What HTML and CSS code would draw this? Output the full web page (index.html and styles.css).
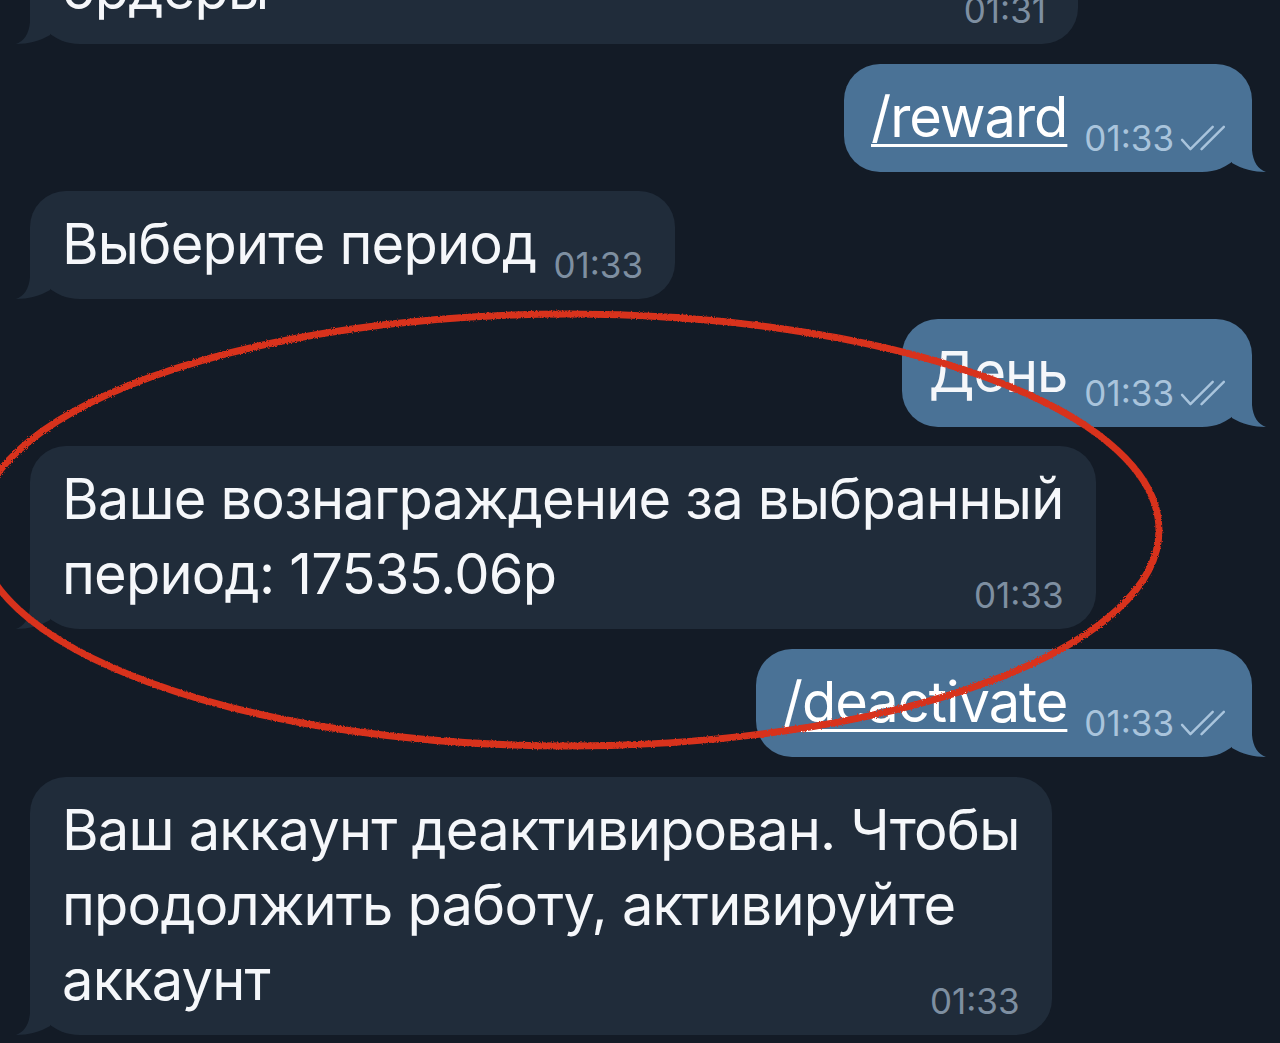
FILE: index.html
```html
<!DOCTYPE html>
<html lang="ru">
<head>
<meta charset="utf-8">
<title>Chat</title>
<link rel="stylesheet" href="styles.css">
</head>
<body>
<div class="chat">
  <div class="row row-in">
    <div class="bubble bubble-in bubble-cut">
      <div class="line line-last"><span class="txt">ордеры</span><span class="meta">01:31</span></div>
      <svg class="tail tail-in" viewBox="0 0 48 52"><path d="M12 43 C22 49 34 52 46 52 C38 49 33 42 32 30 L32 0 L12 0 Z"/></svg>
    </div>
  </div>

  <div class="row row-out">
    <div class="bubble bubble-out">
      <div class="line line-last"><a class="cmd">/reward</a><span class="meta">01:33<svg class="checks" viewBox="0 0 48 28"><path d="M2 16 L11 26 L35 2 M23 26 L47 2"/></svg></span></div>
      <svg class="tail tail-out" viewBox="0 0 48 52"><path d="M12 43 C22 49 34 52 46 52 C38 49 33 42 32 30 L32 0 L12 0 Z"/></svg>
    </div>
  </div>

  <div class="row row-in">
    <div class="bubble bubble-in">
      <div class="line line-last"><span class="txt">Выберите период</span><span class="meta">01:33</span></div>
      <svg class="tail tail-in" viewBox="0 0 48 52"><path d="M12 43 C22 49 34 52 46 52 C38 49 33 42 32 30 L32 0 L12 0 Z"/></svg>
    </div>
  </div>

  <div class="row row-out">
    <div class="bubble bubble-out">
      <div class="line line-last"><span class="txt">День</span><span class="meta">01:33<svg class="checks" viewBox="0 0 48 28"><path d="M2 16 L11 26 L35 2 M23 26 L47 2"/></svg></span></div>
      <svg class="tail tail-out" viewBox="0 0 48 52"><path d="M12 43 C22 49 34 52 46 52 C38 49 33 42 32 30 L32 0 L12 0 Z"/></svg>
    </div>
  </div>

  <div class="row row-in">
    <div class="bubble bubble-in">
      <div class="line">Ваше вознаграждение за выбранный</div>
      <div class="line line-last"><span class="txt">период: 17535.06р</span><span class="meta">01:33</span></div>
      <svg class="tail tail-in" viewBox="0 0 48 52"><path d="M12 43 C22 49 34 52 46 52 C38 49 33 42 32 30 L32 0 L12 0 Z"/></svg>
    </div>
  </div>

  <div class="row row-out">
    <div class="bubble bubble-out">
      <div class="line line-last"><a class="cmd">/deactivate</a><span class="meta">01:33<svg class="checks" viewBox="0 0 48 28"><path d="M2 16 L11 26 L35 2 M23 26 L47 2"/></svg></span></div>
      <svg class="tail tail-out" viewBox="0 0 48 52"><path d="M12 43 C22 49 34 52 46 52 C38 49 33 42 32 30 L32 0 L12 0 Z"/></svg>
    </div>
  </div>

  <div class="row row-in">
    <div class="bubble bubble-in">
      <div class="line">Ваш аккаунт деактивирован. Чтобы</div>
      <div class="line">продолжить работу, активируйте</div>
      <div class="line line-last"><span class="txt">аккаунт</span><span class="meta">01:33</span></div>
      <svg class="tail tail-in" viewBox="0 0 48 52"><path d="M12 43 C22 49 34 52 46 52 C38 49 33 42 32 30 L32 0 L12 0 Z"/></svg>
    </div>
  </div>
</div>

<svg class="annotation" viewBox="0 0 1280 1043">
  <defs>
    <filter id="rough" x="-5%" y="-5%" width="110%" height="110%">
      <feTurbulence type="fractalNoise" baseFrequency="0.8" numOctaves="2" seed="3"/>
      <feDisplacementMap in="SourceGraphic" scale="3"/>
    </filter>
  </defs>
  <ellipse cx="568" cy="530" rx="591" ry="216" fill="none" stroke="#d8301b" stroke-width="7" filter="url(#rough)"/>
</svg>
</body>
</html>
```

FILE: styles.css
```css
html, body {
  margin: 0;
  padding: 0;
}

body {
  width: 1280px;
  height: 1043px;
  overflow: hidden;
  background: #131b26;
  font-family: "Inter", "Roboto", "Liberation Sans", sans-serif;
  color: #f5f7fa;
  position: relative;
}

.chat {
  display: flex;
  flex-direction: column;
  gap: 19.6px;
  padding: 0 28px 0 30px;
}

.row {
  display: flex;
}

.row-in {
  justify-content: flex-start;
}

.row-out {
  justify-content: flex-end;
}

.bubble {
  position: relative;
  border-radius: 36px;
  padding: 16px 32px 17px 32px;
  font-size: 56px;
  line-height: 75px;
  letter-spacing: -1.05px;
}

.bubble-in {
  background: #202c3a;
  border-bottom-left-radius: 50px;
  letter-spacing: -0.8px;
}

.bubble-out {
  background: #4a7296;
  padding: 16px 27px 17px 27px;
  border-bottom-right-radius: 50px;
}

.bubble-cut {
  margin-top: -64px;
  width: 984px;
}

.line {
  white-space: nowrap;
}

.line-last {
  display: flex;
  align-items: flex-end;
  justify-content: space-between;
  gap: 17px;
}

.cmd {
  color: #ffffff;
  text-decoration: underline;
  text-decoration-thickness: 3px;
  text-underline-offset: 7px;
}

.meta {
  display: flex;
  align-items: center;
  gap: 6px;
  font-size: 35px;
  line-height: 30px;
  letter-spacing: 0;
  margin-bottom: 2px;
  white-space: nowrap;
}

.bubble-in .meta {
  color: #7e8fa1;
}

.bubble-out .meta {
  color: #a9c4dc;
}

.checks {
  width: 45px;
  height: 26px;
  fill: none;
  stroke: #a9c4dc;
  stroke-width: 2.6;
  stroke-linecap: round;
  stroke-linejoin: round;
}

.tail {
  position: absolute;
  bottom: 0;
  width: 48px;
  height: 52px;
}

.tail-out {
  right: -16px;
  fill: #4a7296;
}

.tail-in {
  left: -16px;
  fill: #202c3a;
  transform: scaleX(-1);
}

.annotation {
  position: absolute;
  left: 0;
  top: 0;
  width: 1280px;
  height: 1043px;
  pointer-events: none;
}
```
